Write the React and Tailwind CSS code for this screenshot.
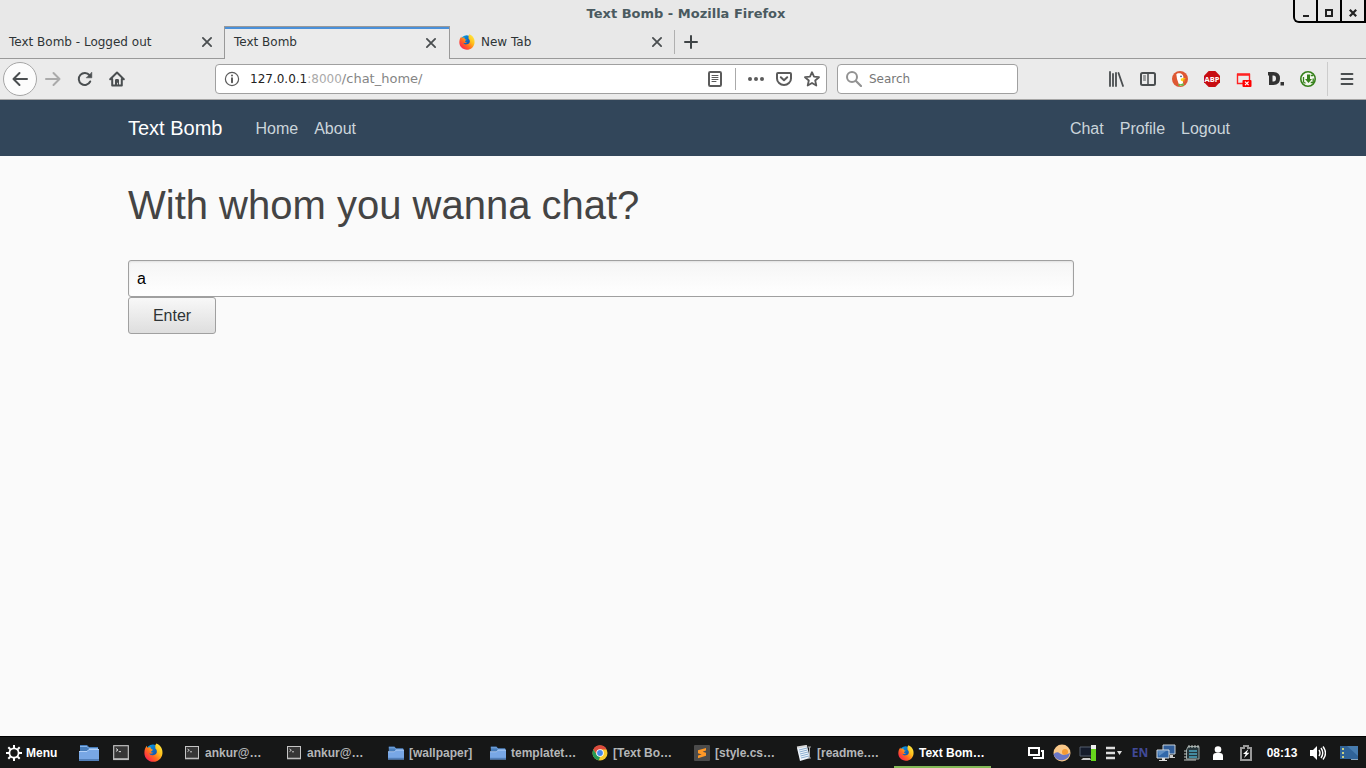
import React, { useState } from "react";

function Firefox({ size }) {
  return (
    <svg width={size} height={size} viewBox="0 0 20 20" aria-hidden="true">
      <defs>
        <linearGradient id="fxBody" x1="1" y1="0" x2="0" y2="1">
          <stop offset="0" stopColor="#fff44f" />
          <stop offset=".35" stopColor="#ffc21c" />
          <stop offset=".6" stopColor="#ff6a20" />
          <stop offset=".8" stopColor="#ff3640" />
          <stop offset="1" stopColor="#e31587" />
        </linearGradient>
        <linearGradient id="fxGlobe" x1="0" y1="0" x2="1" y2="1">
          <stop offset="0" stopColor="#00a8f5" />
          <stop offset="1" stopColor="#20338f" />
        </linearGradient>
      </defs>
      <circle cx="9.5" cy="8.5" r="7" fill="url(#fxGlobe)" />
      <path
        d="M13 .4C18 2.4 20 7 19.4 11.2 18.7 16.3 14.7 19.7 10 19.7 4.5 19.7.4 15.6.4 10.4.4 7.4 1.3 4.8 3 3c.1 1 .4 1.6.8 2.1C5 4.3 6 4.3 7 4.6 6.8 5.8 7.4 6.7 9.4 7c-.2 1-1.8 1.3-2 2.1.1 1.1 1.4 1.1 2.4 1-.9 1.5-3 1.5-4.3.8.6 1.6 2.2 2.4 4.1 2 2.5-.4 4.2-2.2 3.9-4.3-.1-1.3-.8-2-1.5-2.7 0-1.9-.6-3.8 1-5.5Z"
        fill="url(#fxBody)"
      />
    </svg>
  );
}

function Folder({ size }) {
  return (
    <svg width={size} height={size} viewBox="0 0 20 20" aria-hidden="true">
      <path d="M1 2h7l2 2h9v4H1Z" fill="#477dbb" />
      <path d="M1 3.5h7l2 2h9" fill="none" stroke="#86b4ea" />
      <path d="M0 8h8l2-2h10v12H0Z" fill="#78a7e5" />
      <path d="M0 8.5h8l2-2h10" fill="none" stroke="#b1d0f8" />
      <path d="M0 17h20" stroke="#527fb9" strokeWidth="2" />
    </svg>
  );
}

function Terminal({ size }) {
  return (
    <svg width={size} height={size} viewBox="0 0 16 16" aria-hidden="true">
      <rect x="1.5" y="1.5" width="13" height="12" fill="#363636" stroke="#c5c5c5" />
      <path d="M1 13.5h14" stroke="#bbb" strokeWidth="1.6" />
      <path d="m3.5 4 1.8 1.3-1.8 1.3M6 6.8h2" fill="none" stroke="#eee" strokeWidth=".8" />
    </svg>
  );
}

function Chrome() {
  return (
    <svg width="16" height="16" viewBox="0 0 16 16" aria-hidden="true">
      <circle cx="8" cy="8" r="7.5" fill="#f7ca2d" />
      <path d="M1.3 4.5A7.5 7.5 0 0 1 14.7 4.5H8L5 9.7Z" fill="#dd4b3e" />
      <path d="M1.3 4.5 5 10l3 2-1.2 3.4A7.5 7.5 0 0 1 1.3 4.5Z" fill="#239957" />
      <circle cx="8" cy="8" r="3.8" fill="#fff" />
      <circle cx="8" cy="8" r="2.9" fill="#4387e8" />
    </svg>
  );
}

function Sublime() {
  return (
    <svg width="16" height="16" viewBox="0 0 16 16" aria-hidden="true">
      <rect width="16" height="16" rx="1" fill="#4b4b4b" />
      <path d="m4 5.2 8-2.3v2.7L8.6 6.7l3.4 1v3.1l-8 2.5v-2.8l3.7-1.1L4 8.2Z" fill="#fe9827" />
    </svg>
  );
}

function Notes() {
  return (
    <svg width="16" height="16" viewBox="0 0 16 16" aria-hidden="true">
      <path d="m1 3 10-2 3 12-10 3Z" fill="#eef4fb" />
      <path d="m3 5 8-2M3.4 7l8-2M4 9l8-2M4.5 11l8-2M5 13l8-2" stroke="#8baed0" />
      <path d="M1 2.5 11 .8" stroke="#d6d6d6" strokeWidth="2" />
      <path d="M12 2h3M13.5 2v11M12 13h3" stroke="#a8a8a8" />
    </svg>
  );
}

function Stroke({ children, size = 16, width = 2, className = "" }) {
  return (
    <svg
      width={size}
      height={size}
      viewBox="0 0 16 16"
      fill="none"
      stroke="currentColor"
      strokeWidth={width}
      strokeLinecap="round"
      strokeLinejoin="round"
      className={className}
      aria-hidden="true"
    >
      {children}
    </svg>
  );
}

function IconButton({ label, className = "", children }) {
  return (
    <button type="button" aria-label={label} className={`flex shrink-0 items-center justify-center ${className}`}>
      {children}
    </button>
  );
}

function CloseIcon() {
  return (
    <Stroke size={12} width={2.4}>
      <path d="m2.5 2.5 11 11M13.5 2.5l-11 11" />
    </Stroke>
  );
}

function TitleBar() {
  return (
    <header className="relative flex h-[26px] items-center justify-center pt-0.5 pl-1.5 text-[13px] font-bold text-[#4a5a60]">
      <h1>Text Bomb - Mozilla Firefox</h1>
      <div className="absolute top-0 right-0 flex h-[23px] divide-x-2 divide-black rounded-bl-md border-x-2 border-b-2 border-r-black border-black text-[#222]">
        <IconButton label="Minimize" className="w-[23px] pt-1">
          <svg width="8" height="8" viewBox="0 0 8 8"><path d="M1 7h6" stroke="currentColor" strokeWidth="2" /></svg>
        </IconButton>
        <IconButton label="Maximize" className="w-6 pt-1">
          <svg width="8" height="8" viewBox="0 0 8 8"><path d="M1 1h6v6H1Z" fill="none" stroke="currentColor" strokeWidth="2" /></svg>
        </IconButton>
        <IconButton label="Close" className="w-[22px] pt-1">
          <svg width="8" height="8" viewBox="0 0 8 8"><path d="m.8.8 6.4 6.4M7.2.8.8 7.2" stroke="currentColor" strokeWidth="2.2" /></svg>
        </IconButton>
      </div>
    </header>
  );
}

function Tab({ title, active, icon }) {
  return (
    <div
      className={
        active
          ? "flex w-[226px] items-center border-x border-t border-[#999] bg-[#ebebeb] pr-3 pb-px pl-[9px] shadow-[inset_0_2px_0_#4a90d9]"
          : "flex w-56 items-center border-b border-[#999] pr-[11px] pl-[9px]"
      }
    >
      {icon}
      <button type="button" className={`flex-1 pb-px text-left ${icon ? "pl-1.5" : ""}`}>{title}</button>
      <IconButton label={`Close ${title}`} className="text-[#4a4e50]"><CloseIcon /></IconButton>
    </div>
  );
}

function Tabs() {
  return (
    <div className="flex h-[33px] text-[12px] text-[#2e3436]">
      <Tab title="Text Bomb - Logged out" />
      <Tab title="Text Bomb" active />
      <Tab title="New Tab" icon={<Firefox size={16} />} />
      <div className="flex flex-1 items-center border-b border-[#999] text-[#3f4446]">
        <div className="h-6 w-px bg-[#b0b0b0]" />
        <IconButton label="Open a new tab" className="w-8">
          <Stroke><path d="M8 2v12M2 8h12" /></Stroke>
        </IconButton>
      </div>
    </div>
  );
}

function AddressBar() {
  return (
    <div className="flex h-[30px] flex-1 items-center rounded border border-[#a0a0a0] bg-white pr-1.5 pl-2 text-[#5b5b5b]">
      <IconButton label="Site information">
        <Stroke width={1.2}>
          <circle cx="8" cy="8" r="6.6" />
          <path d="M8 7.2v4" strokeWidth="2" />
          <path d="M8 4.4v.1" strokeWidth="2" />
        </Stroke>
      </IconButton>
      <a href="#chat_home" className="flex flex-1 items-baseline pl-2.5 text-[12px] text-[#858585]">
        <span className="text-[#222]">127.0.0.1</span>
        <span className="text-[#aaa]">:8000</span>
        <span className="text-[13px]">/chat_home/</span>
      </a>
      <IconButton label="Reader view" className="mr-3">
        <Stroke>
          <rect x="2" y="1" width="12" height="14" rx="1.2" />
          <path d="M5 4.5h6M5 6.5h6M5 8.5h6M5 10.5h4" strokeWidth="1" />
        </Stroke>
      </IconButton>
      <div className="h-[22px] w-px bg-[#aaa]" />
      <IconButton label="Page actions" className="ml-3">
        <svg width="16" height="16" viewBox="0 0 16 16" fill="currentColor"><circle cx="2" cy="8" r="2" /><circle cx="8" cy="8" r="2" /><circle cx="14" cy="8" r="2" /></svg>
      </IconButton>
      <IconButton label="Save to Pocket" className="ml-3">
        <Stroke>
          <path d="M2 2h12q1 0 1 1v4.5a7 6.5 0 0 1-14 0V3q0-1 1-1Z" />
          <path d="m4.8 6.2 3.2 3 3.2-3" />
        </Stroke>
      </IconButton>
      <IconButton label="Bookmark this page" className="ml-3">
        <Stroke width={1.8}><path d="m8 1.2 2 4.5 5 .5-3.8 3.3 1.1 5L8 12l-4.3 2.5 1.1-5L1 6.2l5-.5Z" /></Stroke>
      </IconButton>
    </div>
  );
}

function Toolbar() {
  return (
    <div className="flex h-[41px] items-center border-b border-[#a6a6a6] bg-[#ebebeb] pl-[3px] text-[#4a4e50]">
      <IconButton label="Back" className="size-[34px] rounded-full border border-[#a6a6a6] bg-[#fcfcfc]">
        <Stroke><path d="M15 8H1.5M7.5 2 1.5 8l6 6" /></Stroke>
      </IconButton>
      <IconButton label="Forward" className="w-8 text-[#aaa]">
        <Stroke><path d="M1 8h13.5M8.5 2l6 6-6 6" /></Stroke>
      </IconButton>
      <IconButton label="Reload" className="w-8">
        <Stroke>
          <path d="M13.2 10.5a6 6 0 1 1-.7-6.3" />
          <path d="M14.8 1.5v5.3H9.5Z" fill="currentColor" strokeWidth=".6" />
        </Stroke>
      </IconButton>
      <IconButton label="Home" className="w-8">
        <Stroke>
          <path d="m1.2 8.2 6.8-6.7 6.8 6.7M3.2 8v6.6h9.6V8" />
          <path d="M6 15V9.2q0-1.2 1.2-1.2h1.6q1.2 0 1.2 1.2V15h-1.2v-3.2H8V15Z" fill="currentColor" stroke="none" />
        </Stroke>
      </IconButton>
      <div className="flex flex-1 gap-2.5 px-[82px]">
        <AddressBar />
        <label className="flex h-[30px] w-[181px] items-center rounded border border-[#a0a0a0] bg-white pl-2 text-[#929292]">
          <Stroke className="shrink-0"><circle cx="6" cy="6" r="5" /><path d="m10 10 5 5" strokeWidth="2.2" /></Stroke>
          <input aria-label="Search" placeholder="Search" className="w-full min-w-0 bg-transparent pl-[7px] text-[12px] outline-none placeholder:text-[#777]" />
        </label>
      </div>
      <IconButton label="Library" className="w-8">
        <svg width="16" height="16" viewBox="0 0 16 16" stroke="currentColor" strokeWidth="1.8"><path d="M2 1v14M5 3v12M8 2v13M10.5 2l4.5 13" strokeLinecap="round" /></svg>
      </IconButton>
      <IconButton label="Sidebars" className="w-8">
        <Stroke><rect x="1" y="2" width="14" height="12" rx="1.5" /><path d="M8 2v12" strokeWidth="1.5" /><path d="M3.5 5h2M3.5 7h2M3.5 9h2" strokeWidth="1" /></Stroke>
      </IconButton>
      <IconButton label="DuckDuckGo" className="w-8">
        <svg width="16" height="16" viewBox="0 0 16 16">
          <circle cx="8" cy="8" r="8" fill="#de5833" />
          <path d="M4.3 3.2C5 1.8 9.6 1.4 11 4.4c.8 1.8.2 3.6-.2 5l.5 4.6-3.8 1.2L5 8Z" fill="#fff" />
          <path d="M8.8 7.8c2-1 4.1-.8 5 0-.9.9-2.5.7-3.5 1.3 1.3.8 2.5.4 3.2.6-1.2 1-3.7.8-4.7-.4Z" fill="#fdd20a" />
          <path d="m6.5 12.4 2.3.8 2.7-1.1.2 3-3-.5-2 .7Z" fill="#65bc46" />
          <circle cx="9" cy="5.4" r=".8" fill="#234f7d" />
        </svg>
      </IconButton>
      <IconButton label="Adblock Plus" className="w-8">
        <svg width="16" height="16" viewBox="0 0 16 16">
          <path d="M4.7 0h6.6L16 4.7v6.6L11.3 16H4.7L0 11.3V4.7Z" fill="#c70d12" />
          <text x="8" y="10.8" textAnchor="middle" fontSize="7.5" fontWeight="700" fontFamily="Open Sans" fill="#fff">ABP</text>
        </svg>
      </IconButton>
      <IconButton label="Block popups" className="w-8">
        <svg width="16" height="16" viewBox="0 0 16 16">
          <path d="M1.5 3.5h12v9h-12Z" fill="none" stroke="#f22" strokeWidth="1.4" />
          <path d="M1 3.5h13" stroke="#f22" strokeWidth="2.4" />
          <rect x="6.5" y="9" width="9" height="7" rx="1" fill="#f00" />
          <path d="m9 10.6 3.6 3.6M12.6 10.6 9 14.2" stroke="#fff" strokeWidth="1.2" />
        </svg>
      </IconButton>
      <IconButton label="Disconnect" className="w-8">
        <svg width="16" height="16" viewBox="0 0 16 16" fill="#333">
          <path fillRule="evenodd" d="M0 1h5.5q6.5 0 6.5 6.5T5.500 14H1V5L0 4Zm4.500 3.500v6h1q2.500 0 2.500-3t-2.500-3Z" />
          <path d="M12.500 11H16v3.500h-3.500Z" />
        </svg>
      </IconButton>
      <IconButton label="Downloads" className="w-8">
        <svg width="16" height="16" viewBox="0 0 16 16">
          <circle cx="8" cy="8" r="7.2" fill="#f4f7ef" stroke="#36811b" strokeWidth="1.6" />
          <path d="M7 3.500h3V8h2l-3.500 4L5 8h2Z" fill="#36811b" />
          <path d="M3.500 6v4.500q0 1.500 2 1.500M13 4.500h-2.300M13.200 7.500v4h-2.500" fill="none" stroke="#36811b" strokeWidth="1.3" />
        </svg>
      </IconButton>
      <div className="ml-[3px] h-[34px] w-px bg-[#ccc]" />
      <IconButton label="Open menu" className="w-[38px]">
        <Stroke width={1.8}><path d="M2.500 3h11M2.500 8h11M2.500 13h11" /></Stroke>
      </IconButton>
    </div>
  );
}

function SiteNav() {
  return (
    <nav className="bg-[#32465a] text-[16px] leading-6 text-[#cbd5db]">
      <div className="mx-auto flex h-14 max-w-[1110px] items-center">
        <a href="#top" className="mr-[33px] text-xl leading-[30px] text-white">Text Bomb</a>
        <div className="flex flex-1 gap-4 pt-0.5">
          <a href="#home">Home</a>
          <a href="#about">About</a>
        </div>
        <div className="flex gap-4 pt-0.5 pr-2">
          <a href="#chat">Chat</a>
          <a href="#profile">Profile</a>
          <a href="#logout">Logout</a>
        </div>
      </div>
    </nav>
  );
}

function ChatForm() {
  const [name, setName] = useState("a");
  return (
    <main className="mx-auto w-full max-w-[1110px] flex-1 pt-[25px] text-[16px]">
      <h2 className="mb-[31px] text-[40px] leading-[48px] text-[#444]">With whom you wanna chat?</h2>
      <form className="flex max-w-[946px] flex-col items-start" onSubmit={(e) => e.preventDefault()}>
        <input
          aria-label="Chat partner"
          value={name}
          onChange={(e) => setName(e.target.value)}
          className="h-[37px] w-full rounded-[3px] border border-[#a0a0a0] bg-linear-to-b from-[#f5f5f5] to-white px-2 text-black shadow-[inset_0_1px_2px_#e0e0e0] outline-none"
        />
        <button type="submit" className="h-[37px] w-[88px] rounded-[3px] border border-[#a0a0a0] bg-linear-to-b from-[#f8f8f8] to-[#dedede] text-[#2e3436]">
          Enter
        </button>
      </form>
    </main>
  );
}

const tasks = [
  { title: "ankur@…", icon: <Terminal size={16} /> },
  { title: "ankur@…", icon: <Terminal size={16} /> },
  { title: "[wallpaper]", icon: <Folder size={16} /> },
  { title: "templatet…", icon: <Folder size={16} /> },
  { title: "[Text Bo…", icon: <Chrome /> },
  { title: "[style.cs…", icon: <Sublime /> },
  { title: "[readme.…", icon: <Notes /> },
  { title: "Text Bom…", icon: <Firefox size={16} />, active: true },
];

function Tray() {
  return (
    <div className="flex items-center text-white">
      <IconButton label="Windows" className="w-[26px]">
        <svg width="16" height="16" viewBox="0 0 16 16" fill="none" stroke="currentColor" strokeWidth="2"><path d="M1 3h10v7H1ZM13 6h2v7H5" /></svg>
      </IconButton>
      <IconButton label="Weather" className="w-[26px]">
        <svg width="18" height="18" viewBox="0 0 18 18">
          <circle cx="9" cy="9" r="8.5" fill="#f9c889" />
          <circle cx="12" cy="8" r="3" fill="#f59b34" />
          <path d="M.5 10.5q3-4 6.500-1t10-.5a8.500 8.500 0 0 1-16.500 1.500Z" fill="#6976c6" />
        </svg>
      </IconButton>
      <IconButton label="System monitor" className="w-[26px]">
        <svg width="18" height="18" viewBox="0 0 18 18">
          <path d="M1 3h12v9H1Z" fill="#151c2c" stroke="#555e6e" />
          <path d="M2 16h10l-1-2H4Z" fill="#ccc" />
          <path d="M12 1h5v16h-5Z" fill="#eee" />
          <path d="M12 5h5v12h-5Z" fill="#66d51c" />
        </svg>
      </IconButton>
      <IconButton label="Clipboard" className="w-[26px] text-[#ddd]">
        <svg width="16" height="16" viewBox="0 0 16 16"><path d="M0 3h9M0 8h9M0 13h9" stroke="currentColor" strokeWidth="2.500" /><path d="M11 6h5l-2.500 4Z" fill="currentColor" /></svg>
      </IconButton>
      <button type="button" className="w-[26px] font-['Open_Sans',sans-serif] text-[12px] text-[#414a98]">EN</button>
      <IconButton label="Network" className="w-[26px]">
        <svg width="20" height="18" viewBox="0 0 20 18">
          <path d="M7 1h12v9H7Z" fill="#315e9a" stroke="#c8d1d8" />
          <path d="M14 11h3v2h2v1h-5Z" fill="#ccc" />
          <path d="M1 6h12v8H1Z" fill="#3168aa" stroke="#d7dde1" />
          <path d="m2 7 8 0-7 5Z" fill="#5e8ec3" />
          <path d="M6 14h3v2h2v1H3v-1h3Z" fill="#ddd" />
        </svg>
      </IconButton>
      <IconButton label="Notes" className="w-[26px]">
        <svg width="16" height="16" viewBox="0 0 16 16">
          <path d="M4 1.500h11V14H2.500V5Z" fill="#26363b" stroke="#96a09d" />
          <path d="M5 0v3M8 0v3M11 0v3M14 0v3M0 6h3M0 9h3M0 12h3M0 15h12" stroke="#c1c8c6" />
          <path d="M5 6h8M5 9h8M5 12h8" stroke="#4fa8c4" strokeWidth="1.600" />
        </svg>
      </IconButton>
      <IconButton label="User" className="w-[26px]">
        <svg width="12" height="14" viewBox="0 0 12 14" fill="currentColor"><circle cx="6" cy="3.500" r="3.300" /><path d="M1 14v-4q0-3 3-3h4q3 0 3 3v4Z" /></svg>
      </IconButton>
      <IconButton label="Battery" className="w-[30px]">
        <svg width="12" height="16" viewBox="0 0 12 16"><path d="M1 3h3V1h4v2h3v12H1Z" fill="none" stroke="#999" strokeWidth="2" /><path d="m8.500 4-5.500 5h2.700L4 13l5.500-5.200H6.700Z" fill="#fff" /></svg>
      </IconButton>
      <time className="w-[42px] text-center">08:13</time>
      <IconButton label="Volume" className="w-[29px]">
        <svg width="16" height="16" viewBox="0 0 16 16" fill="currentColor"><path d="M0 5h3l4-4v14l-4-4H0Z" /><path d="M9 5q2 3 0 6M11 3q3.500 5 0 10M13 1.500q5 6.500 0 13" fill="none" stroke="currentColor" strokeWidth="1.400" /></svg>
      </IconButton>
      <IconButton label="Show desktop" className="w-[34px]">
        <svg width="18" height="16" viewBox="0 0 18 16"><path d="M0 1h18v13H0Z" fill="#306397" /><path d="M18 1v10L7 1Z" fill="#477caf" /><path d="M2 4h2M2 8h2M2 12h2" stroke="#c8cf84" strokeWidth="2" /><path d="M11 14h7v1h-7Z" fill="#8ba6bd" /></svg>
      </IconButton>
    </div>
  );
}

function Taskbar() {
  return (
    <footer className="flex h-8 border-t border-black bg-[#161717] pl-1.5 text-[12px] font-bold text-[#b4b6b8]">
      <button type="button" className="flex w-[67px] items-center gap-1 text-white">
        <svg width="16" height="16" viewBox="0 0 16 16" fill="none" stroke="currentColor" aria-hidden="true">
          <circle cx="8" cy="8" r="4.600" strokeWidth="1.800" />
          <path d="M8 0v3M8 13v3M0 8h3M13 8h3M2.300 2.300l2 2M11.700 11.700l2 2M2.300 13.700l2-2M11.700 4.300l2-2" strokeWidth="2" />
        </svg>
        Menu
      </button>
      <IconButton label="Files" className="w-8"><Folder size={20} /></IconButton>
      <IconButton label="Terminal" className="w-8"><Terminal size={18} /></IconButton>
      <IconButton label="Firefox" className="w-8"><Firefox size={19} /></IconButton>
      <div className="flex flex-1 gap-[5px] pl-[11px]">
        {tasks.map((task, index) => (
          <button
            type="button"
            key={index}
            className={`flex w-[97px] items-center gap-[5px] border-b-2 pt-0.5 pl-1 whitespace-nowrap ${task.active ? "border-[#83b957] text-white" : "border-transparent"}`}
          >
            {task.icon}
            {task.title}
          </button>
        ))}
      </div>
      <Tray />
    </footer>
  );
}

export default function App() {
  return (
    <div className="flex min-h-screen flex-col bg-[#fafafa] font-['Liberation_Sans',sans-serif]">
      <div className="bg-[#e8e8e8] font-['DejaVu_Sans',sans-serif]">
        <TitleBar />
        <Tabs />
        <Toolbar />
      </div>
      <SiteNav />
      <ChatForm />
      <Taskbar />
    </div>
  );
}
